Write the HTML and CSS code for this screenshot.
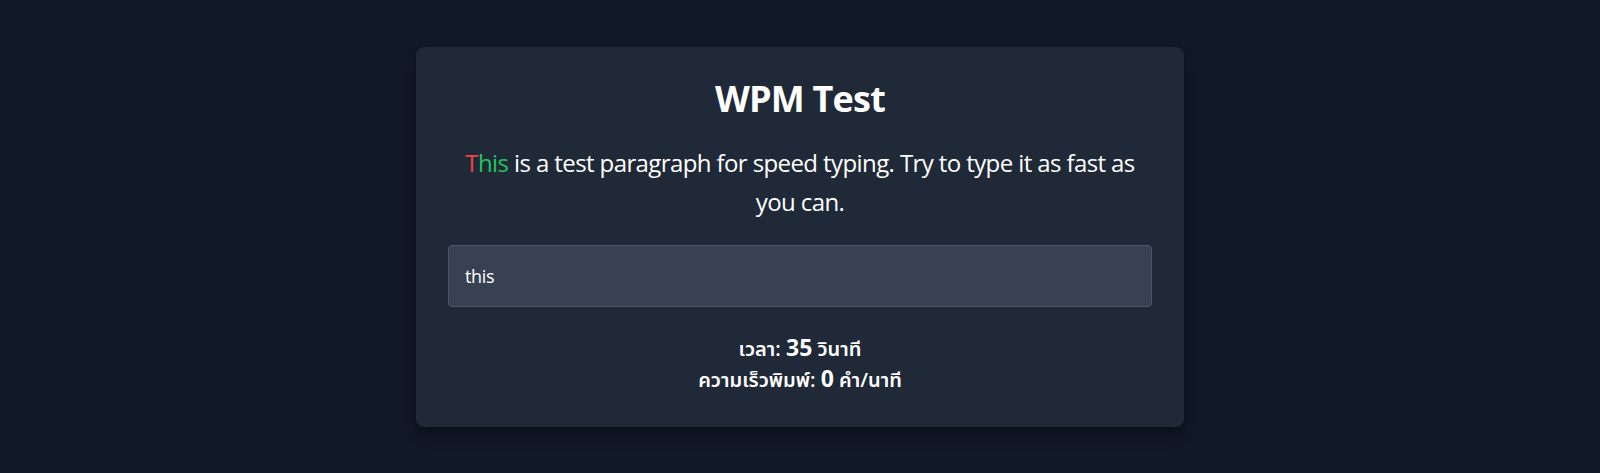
FILE: index.html
```html
<!DOCTYPE html>
<html lang="th">
<head>
<meta charset="utf-8">
<title>WPM Test</title>
<link rel="stylesheet" href="styles.css">
</head>
<body>
<main class="page">
  <section class="card">
    <h1 class="title">WPM Test</h1>
    <p class="passage"><span class="wrong">T</span><span class="right">his</span> is a test paragraph for speed typing. Try to type it as fast as you can.</p>
    <input class="typing" type="text" value="this">
    <div class="stats">
      <div class="stat">เวลา: <span class="num">35</span> วินาที</div>
      <div class="stat">ความเร็วพิมพ์: <span class="num">0</span> คำ/นาที</div>
    </div>
  </section>
</main>
</body>
</html>
```
FILE: styles.css
```css
html, body {
  margin: 0;
  padding: 0;
  background: #111827;
  color: #ffffff;
  font-family: "Open Sans", "Noto Sans", "Noto Sans Thai", sans-serif;
}
.page {
  min-height: 473px;
  box-sizing: border-box;
  display: flex;
  justify-content: center;
  align-items: flex-start;
  padding-top: 47px;
}
.card {
  width: 768px;
  box-sizing: border-box;
  background: #1f2937;
  border-radius: 8px;
  padding: 32px;
  box-shadow: 0 10px 15px -3px rgba(0,0,0,0.3), 0 4px 6px -4px rgba(0,0,0,0.3);
  text-align: center;
}
.title {
  margin: 0 0 24px;
  font-size: 36px;
  line-height: 40px;
  font-weight: 700;
  letter-spacing: -0.8px;
}
.passage {
  margin: 0 0 24px;
  font-size: 24px;
  line-height: 39px;
  letter-spacing: -0.6px;
}
.wrong { color: #ef4444; }
.right { color: #22c55e; }
.typing {
  display: block;
  width: 100%;
  box-sizing: border-box;
  margin: 0;
  padding: 16px;
  font: inherit;
  font-size: 18px;
  line-height: 28px;
  letter-spacing: -0.3px;
  color: #ffffff;
  background: #374151;
  border: 1px solid #4b5563;
  border-radius: 4px;
  outline: none;
}
.stats {
  margin-top: 26px;
}
.stat {
  height: 31px;
  font-size: 20px;
  line-height: 31px;
  font-weight: 600;
}
.num {
  font-size: 23px;
  line-height: 1;
  font-weight: 700;
}
```
